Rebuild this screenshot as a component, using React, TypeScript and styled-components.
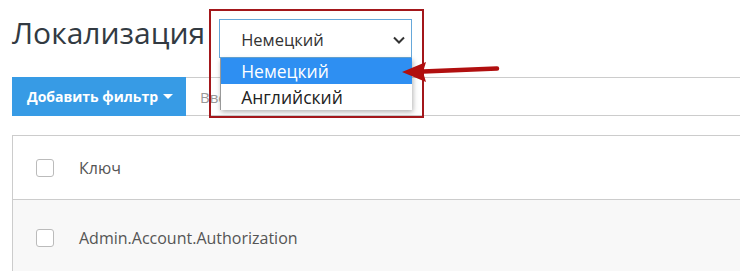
import styled, { createGlobalStyle } from "styled-components"

const Global = createGlobalStyle`
    html, body {
        margin: 0;
        background: #fff;
        overflow: hidden;
    }
    body {
        font-family: "Open Sans", "Liberation Sans", sans-serif;
    }
`

export default function App(){
    return (
    <>
        <Global/>
        <Page>
            <Header>
                <Title>Локализация</Title>

                <SelectWrap>
                    <Select>
                        <span>Немецкий</span>
                        <svg width="14" height="10" viewBox="0 0 14 10">
                            <path d="M2 2.5 L7 7.5 L12 2.5" fill="none" stroke="#333" strokeWidth="2"/>
                        </svg>
                    </Select>

                    <Options>
                        <Option $active>Немецкий</Option>
                        <Option>Английский</Option>
                    </Options>

                    <Frame/>

                    <Arrow width="100" height="30" viewBox="0 0 100 30">
                        <path d="M96 7.5 L22 10.5" stroke="#b10f0f" strokeWidth="4.5" strokeLinecap="round"/>
                        <path d="M1 11 L25 1 L22 11 L25 21 Z" fill="#b10f0f"/>
                    </Arrow>
                </SelectWrap>
            </Header>

            <Toolbar>
                <FilterButton>
                    Добавить фильтр
                    <Caret/>
                </FilterButton>
                <Search placeholder="Введите ключ"/>
            </Toolbar>

            <Table>
                <Row>
                    <Check/>
                    <Cell>Ключ</Cell>
                </Row>
                <Row $striped>
                    <Check/>
                    <Cell>Admin.Account.Authorization</Cell>
                </Row>
            </Table>
        </Page>
    </>
    )
}

const Page = styled.div`
    width: 1100px;
    padding: 19px 12px 0;
`

const Header = styled.div`
    display: flex;
    align-items: flex-start;
    gap: 14px;
`

const Title = styled.h1`
    margin: -4px 0 0;
    font-size: 30px;
    line-height: 36px;
    font-weight: 400;
    color: #323a42;
`

const SelectWrap = styled.div`
    position: relative;
    width: 193px;
`

const Select = styled.div`
    box-sizing: border-box;
    height: 39px;
    border: 1px solid #66a8da;
    display: flex;
    align-items: center;
    justify-content: space-between;
    padding: 2px 5px 0 21px;
    font-size: 16.5px;
    color: #333;
`

const Options = styled.div`
    position: absolute;
    top: 39px;
    left: 1px;
    right: 0;
    background: #fff;
    border-left: 1px solid #999;
    box-shadow: 1px 2px 5px rgba(0, 0, 0, 0.3);
    z-index: 2;
`

const Option = styled.div<{ $active?: boolean }>`
    height: 26px;
    line-height: 26px;
    padding-left: 20px;
    font-size: 17.5px;
    background: ${p => p.$active ? "#2e8ff2" : "#fff"};
    color: ${p => p.$active ? "#fff" : "#222"};
`

const Frame = styled.div`
    position: absolute;
    left: -10px;
    top: -10px;
    width: 215px;
    height: 109px;
    box-sizing: border-box;
    border: 2px solid #a3171b;
    z-index: 3;
`

const Arrow = styled.svg`
    position: absolute;
    left: 182px;
    top: 42px;
    z-index: 4;
`

const Toolbar = styled.div`
    display: flex;
    margin-top: 19px;
    height: 39px;
`

const FilterButton = styled.button`
    width: 174px;
    border: none;
    background: #379be5;
    color: #fff;
    font-family: inherit;
    font-size: 14px;
    font-weight: 700;
    display: flex;
    align-items: center;
    justify-content: center;
    gap: 5px;
    padding: 0 0 0 2px;
`

const Caret = styled.span`
    width: 0;
    height: 0;
    border-left: 5px solid transparent;
    border-right: 5px solid transparent;
    border-top: 5px solid #fff;
`

const Search = styled.input`
    flex: 1;
    box-sizing: border-box;
    border: 1px solid #ccc;
    border-left: none;
    padding: 0 14px;
    font-family: inherit;
    font-size: 15px;

    &::placeholder{
        color: #999;
    }
`

const Table = styled.div`
    margin-top: 19px;
    border-top: 1px solid #ccc;
    border-left: 1px solid #ccc;
`

const Row = styled.div<{ $striped?: boolean }>`
    display: flex;
    align-items: center;
    height: ${p => p.$striped ? "76px" : "63px"};
    padding-left: 23px;
    background: ${p => p.$striped ? "#f8f8f8" : "#fff"};
    border-bottom: 1px solid #ccc;
`

const Check = styled.span`
    width: 16px;
    height: 16px;
    border: 1px solid #bbb;
    border-radius: 3px;
    background: #fff;
    margin-right: 25px;
`

const Cell = styled.span`
    font-size: 16px;
    color: #555;
`
